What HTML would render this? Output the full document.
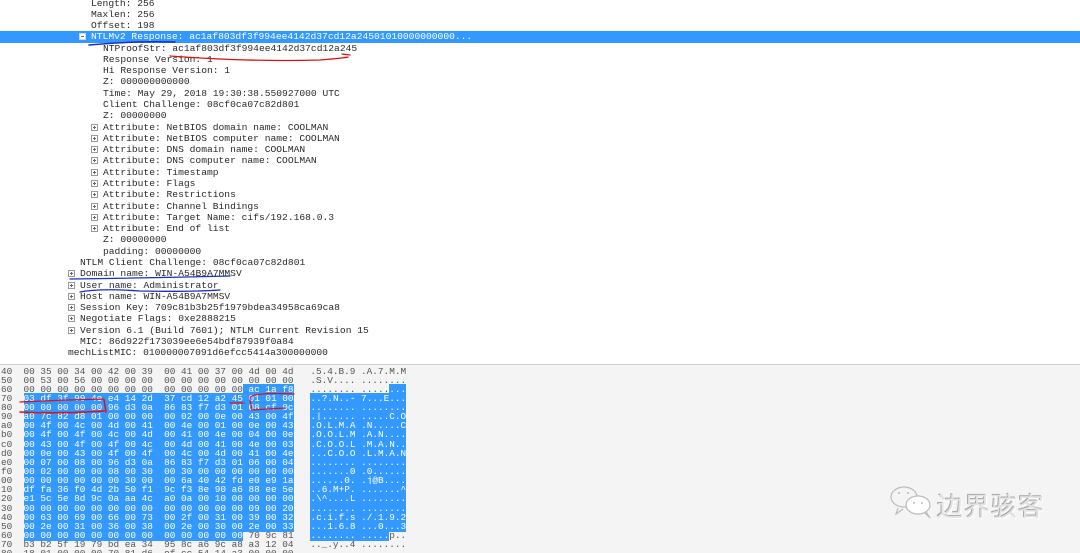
<!DOCTYPE html>
<html><head><meta charset="utf-8"><style>
html,body{margin:0;width:1080px;height:553px;overflow:hidden;background:#fff;}
body{position:relative;font-family:"Liberation Mono",monospace;}
.t{position:absolute;left:0;top:-2.5px;width:1080px;font-size:9.65px;line-height:11.29px;color:#2a2a2a;}
.t div{height:11.29px;white-space:pre;}
.sel{background:#3399ff;color:#fff;}
.pl{display:inline-block;width:7px;height:7px;border:1px solid #999;box-sizing:border-box;vertical-align:-1px;margin-right:5px;position:relative;background:#fff}
.pl:before{content:"";position:absolute;left:1px;right:1px;top:2px;height:1px;background:#666}
.pl.p:after{content:"";position:absolute;top:1px;bottom:1px;left:2px;width:1px;background:#666}
.sel .pl{border-color:#cde;}
.hx{position:absolute;left:0;top:364px;width:1080px;height:189px;background:#f4f4f4;border-top:1px solid #cfcfcf;overflow:hidden}
.h{position:absolute;left:1px;top:1.5px;font-size:9.4px;line-height:9.15px;color:#555;}
.h div{height:9.15px;white-space:pre;}
.b{background:#3399ff;color:#fff}
.wm{position:absolute;left:937px;top:490px;font-family:"Noto Sans CJK SC",sans-serif;font-size:26px;line-height:32px;color:#e2e2e2;text-shadow:-1px -1px 0 #aaa,1px 1px 0 #fff;letter-spacing:1px}
</style></head><body>
<div class="t">
<div style="padding-left:91px">Length: 256</div>
<div style="padding-left:91px">Maxlen: 256</div>
<div style="padding-left:91px">Offset: 198</div>
<div class="sel" style="padding-left:79px"><span class="pl"></span>NTLMv2 Response: ac1af803df3f994ee4142d37cd12a24501010000000000...</div>
<div style="padding-left:103px">NTProofStr: ac1af803df3f994ee4142d37cd12a245</div>
<div style="padding-left:103px">Response Version: 1</div>
<div style="padding-left:103px">Hi Response Version: 1</div>
<div style="padding-left:103px">Z: 000000000000</div>
<div style="padding-left:103px">Time: May 29, 2018 19:30:38.550927000 UTC</div>
<div style="padding-left:103px">Client Challenge: 08cf0ca07c82d801</div>
<div style="padding-left:103px">Z: 00000000</div>
<div style="padding-left:91px"><span class="pl p"></span>Attribute: NetBIOS domain name: COOLMAN</div>
<div style="padding-left:91px"><span class="pl p"></span>Attribute: NetBIOS computer name: COOLMAN</div>
<div style="padding-left:91px"><span class="pl p"></span>Attribute: DNS domain name: COOLMAN</div>
<div style="padding-left:91px"><span class="pl p"></span>Attribute: DNS computer name: COOLMAN</div>
<div style="padding-left:91px"><span class="pl p"></span>Attribute: Timestamp</div>
<div style="padding-left:91px"><span class="pl p"></span>Attribute: Flags</div>
<div style="padding-left:91px"><span class="pl p"></span>Attribute: Restrictions</div>
<div style="padding-left:91px"><span class="pl p"></span>Attribute: Channel Bindings</div>
<div style="padding-left:91px"><span class="pl p"></span>Attribute: Target Name: cifs/192.168.0.3</div>
<div style="padding-left:91px"><span class="pl p"></span>Attribute: End of list</div>
<div style="padding-left:103px">Z: 00000000</div>
<div style="padding-left:103px">padding: 00000000</div>
<div style="padding-left:80px">NTLM Client Challenge: 08cf0ca07c82d801</div>
<div style="padding-left:68px"><span class="pl p"></span>Domain name: WIN-A54B9A7MMSV</div>
<div style="padding-left:68px"><span class="pl p"></span>User name: Administrator</div>
<div style="padding-left:68px"><span class="pl p"></span>Host name: WIN-A54B9A7MMSV</div>
<div style="padding-left:68px"><span class="pl p"></span>Session Key: 709c81b3b25f1979bdea34958ca69ca8</div>
<div style="padding-left:68px"><span class="pl p"></span>Negotiate Flags: 0xe2888215</div>
<div style="padding-left:68px"><span class="pl p"></span>Version 6.1 (Build 7601); NTLM Current Revision 15</div>
<div style="padding-left:80px">MIC: 86d922f173039ee6e54bdf87939f0a84</div>
<div style="padding-left:68px">mechListMIC: 010000007091d6efcc5414a300000000</div>
</div>
<div class="hx"><div class="h">
<div>40  00 35 00 34 00 42 00 39  00 41 00 37 00 4d 00 4d   .5.4.B.9 .A.7.M.M</div>
<div>50  00 53 00 56 00 00 00 00  00 00 00 00 00 00 00 00   .S.V.... ........</div>
<div>60  00 00 00 00 00 00 00 00  00 00 00 00 00<span class="b"> ac 1a f8</span>   ........ .....<span class="b">...</span></div>
<div>70  <span class="b">03 df 3f 99 4e e4 14 2d  37 cd 12 a2 45 01 01 00</span>   <span class="b">..?.N..- 7...E...</span></div>
<div>80  <span class="b">00 00 00 00 00 96 d3 0a  86 83 f7 d3 01 08 cf 0c</span>   <span class="b">........ ........</span></div>
<div>90  <span class="b">a0 7c 82 d8 01 00 00 00  00 02 00 0e 00 43 00 4f</span>   <span class="b">.|...... .....C.O</span></div>
<div>a0  <span class="b">00 4f 00 4c 00 4d 00 41  00 4e 00 01 00 0e 00 43</span>   <span class="b">.O.L.M.A .N.....C</span></div>
<div>b0  <span class="b">00 4f 00 4f 00 4c 00 4d  00 41 00 4e 00 04 00 0e</span>   <span class="b">.O.O.L.M .A.N....</span></div>
<div>c0  <span class="b">00 43 00 4f 00 4f 00 4c  00 4d 00 41 00 4e 00 03</span>   <span class="b">.C.O.O.L .M.A.N..</span></div>
<div>d0  <span class="b">00 0e 00 43 00 4f 00 4f  00 4c 00 4d 00 41 00 4e</span>   <span class="b">...C.O.O .L.M.A.N</span></div>
<div>e0  <span class="b">00 07 00 08 00 96 d3 0a  86 83 f7 d3 01 06 00 04</span>   <span class="b">........ ........</span></div>
<div>f0  <span class="b">00 02 00 00 00 08 00 30  00 30 00 00 00 00 00 00</span>   <span class="b">.......0 .0......</span></div>
<div>00  <span class="b">00 00 00 00 00 00 30 00  00 6a 40 42 fd e0 e9 1a</span>   <span class="b">......0. .j@B....</span></div>
<div>10  <span class="b">df fa 36 f0 4d 2b 50 f1  9c f3 8e 90 a6 88 ee 5e</span>   <span class="b">..6.M+P. .......^</span></div>
<div>20  <span class="b">e1 5c 5e 8d 9c 0a aa 4c  a0 0a 00 10 00 00 00 00</span>   <span class="b">.\^....L ........</span></div>
<div>30  <span class="b">00 00 00 00 00 00 00 00  00 00 00 00 00 09 00 20</span>   <span class="b">........ ........</span></div>
<div>40  <span class="b">00 63 00 69 00 66 00 73  00 2f 00 31 00 39 00 32</span>   <span class="b">.c.i.f.s ./.1.9.2</span></div>
<div>50  <span class="b">00 2e 00 31 00 36 00 38  00 2e 00 30 00 2e 00 33</span>   <span class="b">...1.6.8 ...0...3</span></div>
<div>60  <span class="b">00 00 00 00 00 00 00 00  00 00 00 00 00</span> 70 9c 81   <span class="b">........ .....</span>p..</div>
<div>70  b3 b2 5f 19 79 bd ea 34  95 8c a6 9c a8 a3 12 04   .._.y..4 ........</div>
<div>80  18 01 00 00 00 70 81 d6  ef cc 54 14 a3 00 00 00   ........ ........</div>
</div></div>
<svg style="position:absolute;left:0;top:0" width="1080" height="553">
<g fill="none" stroke-linecap="round">
<path d="M89 45 Q130 41 175 42" stroke="#1a2fc0" stroke-width="1.5"/>
<path d="M170 56 Q250 62 320 60 Q345 58 348 57 M342 54 L350 55" stroke="#e01010" stroke-width="1.3"/>
<path d="M70 279 Q150 278 230 276" stroke="#1a2fc0" stroke-width="1.3"/>
<path d="M80 292 Q100 288 140 291 Q190 292 220 290" stroke="#1a2fc0" stroke-width="1.3"/>
<path d="M20 402 Q60 400 104 399" stroke="#e01010" stroke-width="1.3"/>
<path d="M20 412 Q60 414 104 411 M104 400 L106 412" stroke="#e01010" stroke-width="1.5"/>
<path d="M230 403 L244 403 M250 398 Q252 392 294 394 M250 400 L252 410 L285 408" stroke="#e01010" stroke-width="1.2"/>
</g>
<g fill="none" stroke="#bbb" stroke-width="1.2">
<ellipse cx="904" cy="497" rx="13" ry="10"/>
<ellipse cx="918" cy="505" rx="12" ry="9" fill="#fff"/>
<path d="M898 508 L896 514 L903 509"/>
<path d="M925 513 L930 518 L926 512"/>
</g>
<g fill="#bbb"><circle cx="899" cy="493" r="1"/><circle cx="908" cy="493" r="1"/><circle cx="914" cy="503" r="1"/><circle cx="922" cy="503" r="1"/></g>
</svg>
<div class="wm">边界骇客</div>
</body></html>
